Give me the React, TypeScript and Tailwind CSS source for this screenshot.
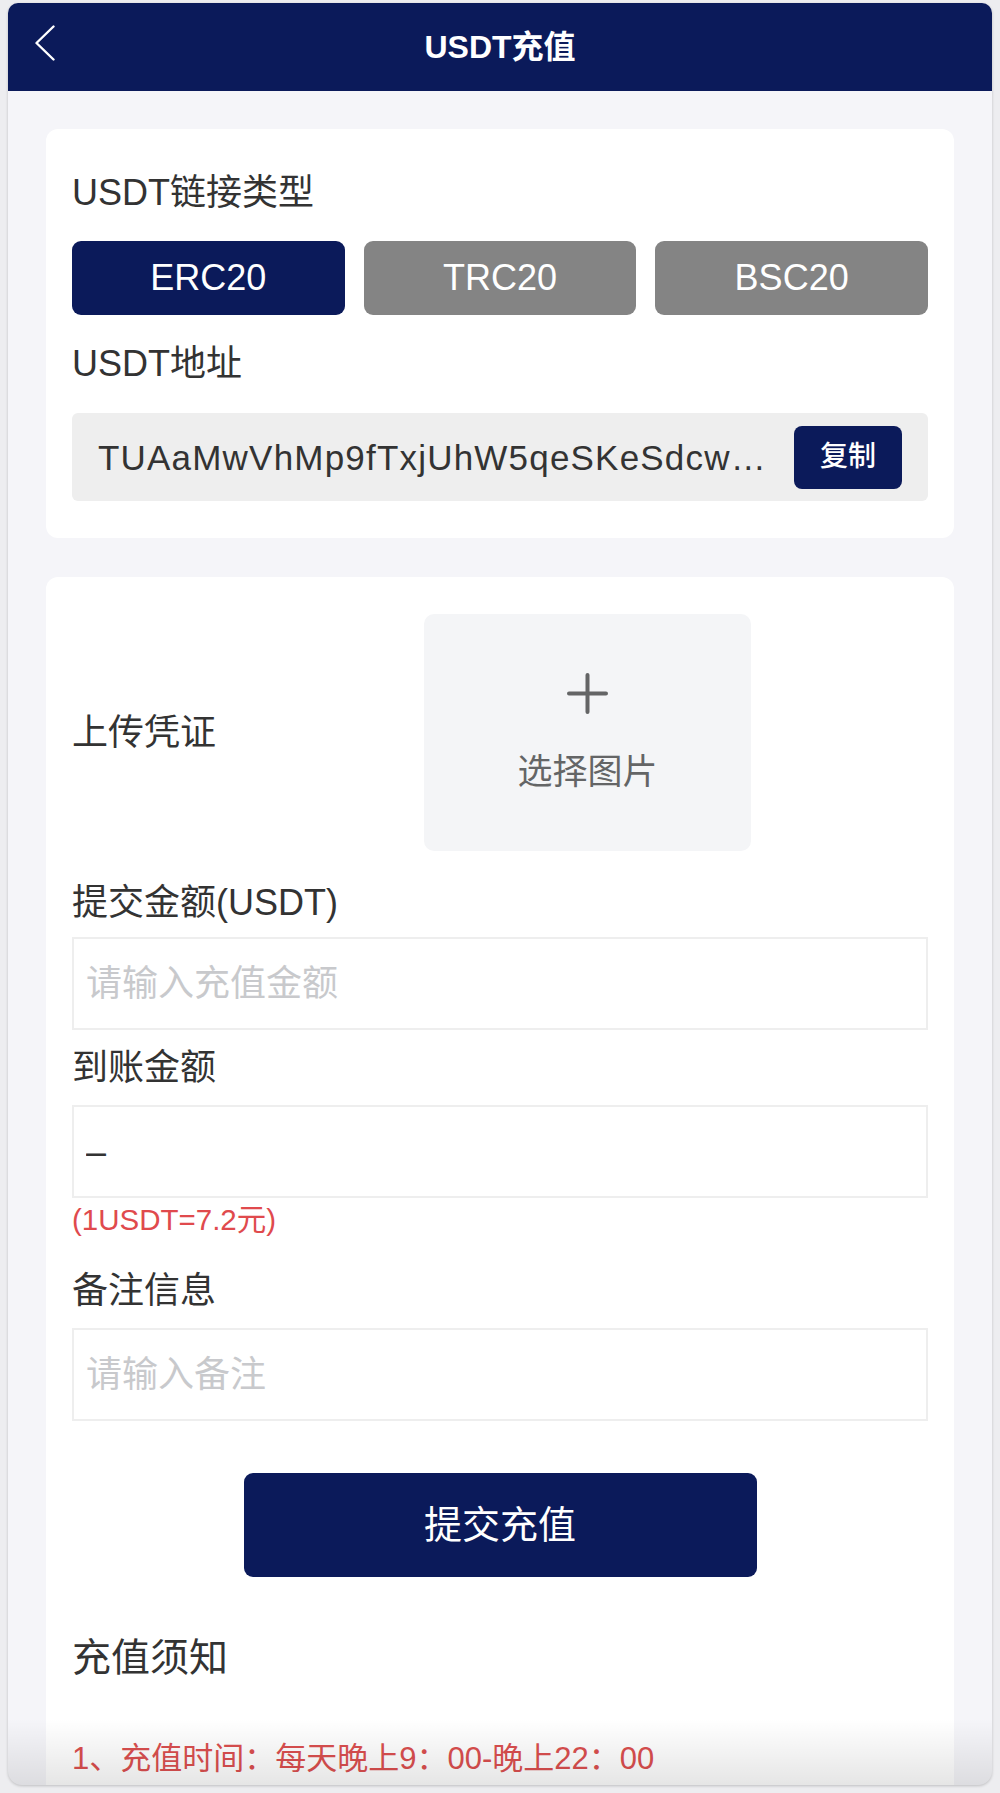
import { useState } from 'react'

const chains = ['ERC20', 'TRC20', 'BSC20']

export default function App() {
  const [chain, setChain] = useState('ERC20')

  return (
    <div className="h-[1793px] overflow-hidden bg-[#ededf0] px-[8px] pt-[3px] font-['Liberation_Sans','Noto_Sans_CJK_SC',sans-serif]">
      <div className="relative h-[1782px] overflow-hidden rounded-t-[10px] rounded-b-[14px] bg-[#f5f5f9] shadow-[0_1px_3px_rgba(0,0,0,0.2)]">
        {/* header */}
        <div className="relative flex h-[88px] items-center justify-center bg-[#0b1a5a]">
          <svg className="absolute left-[26px] top-[22px]" width="22" height="36" viewBox="0 0 22 36" fill="none">
            <path d="M19.5 1.5 L2.5 18 L19.5 34.5" stroke="#fff" strokeWidth="2.4" strokeLinecap="round" strokeLinejoin="round" />
          </svg>
          <h1 className="text-[32px] font-bold leading-none text-white">USDT充值</h1>
        </div>

        <div className="px-[38px] pt-[38px]">
          {/* chain + address */}
          <div className="rounded-[12px] bg-white px-[26px] pt-[39px] pb-[37px]">
            <p className="text-[36px] leading-[50px] text-[#333]">USDT链接类型</p>
            <div className="mt-[23px] grid grid-cols-3 gap-[19px]">
              {chains.map(c => (
                <button
                  key={c}
                  onClick={() => setChain(c)}
                  className={
                    'h-[74px] rounded-[9px] text-[36px] leading-none text-white ' +
                    (chain === c ? 'bg-[#0b1a5a]' : 'bg-[#848484]')
                  }
                >
                  {c}
                </button>
              ))}
            </div>
            <p className="mt-[24px] text-[36px] leading-[50px] text-[#333]">USDT地址</p>
            <div className="mt-[24px] flex h-[88px] items-center rounded-[6px] bg-[#eeeeee] pl-[26px] pr-[26px]">
              <span className="min-w-0 flex-1 whitespace-nowrap text-[35px] leading-none tracking-[1.2px] text-[#333]">
                TUAaMwVhMp9fTxjUhW5qeSKeSdcw…
              </span>
              <button className="h-[63px] w-[108px] shrink-0 rounded-[8px] bg-[#0b1a5a] text-[28px] font-medium leading-none text-white">
                复制
              </button>
            </div>
          </div>

          {/* form */}
          <div className="mt-[39px] rounded-[12px] bg-white px-[26px] pt-[37px] pb-[40px]">
            <div className="flex items-center">
              <p className="w-[352px] text-[36px] leading-[50px] text-[#333]">上传凭证</p>
              <div className="flex h-[237px] w-[327px] flex-col items-center rounded-[10px] bg-[#f4f5f7] pt-[59px]">
                <svg width="41" height="41" viewBox="0 0 41 41">
                  <path d="M20.5 2 V39 M2 20.5 H39" stroke="#646566" strokeWidth="4" strokeLinecap="round" />
                </svg>
                <span className="mt-[33px] text-[35px] leading-[50px] text-[#646566]">选择图片</span>
              </div>
            </div>

            <p className="mt-[27px] text-[36px] leading-[50px] text-[#333]">提交金额(USDT)</p>
            <input
              placeholder="请输入充值金额"
              className="mt-[9px] h-[93px] w-full border-2 border-[#eeeeee] px-[12px] text-[36px] text-[#333] outline-none placeholder:text-[#c8c9cc]"
            />

            <p className="mt-[13px] text-[36px] leading-[50px] text-[#333]">到账金额</p>
            <input
              readOnly
              value="–"
              className="mt-[12px] h-[93px] w-full border-2 border-[#eeeeee] px-[12px] text-[36px] text-[#333] outline-none"
            />
            <p className="mt-[2px] text-[29.5px] leading-[40px] text-[#e04a4d]">(1USDT=7.2元)</p>

            <p className="mt-[26px] text-[36px] leading-[50px] text-[#333]">备注信息</p>
            <input
              placeholder="请输入备注"
              className="mt-[12px] h-[93px] w-full border-2 border-[#eeeeee] px-[12px] text-[36px] text-[#333] outline-none placeholder:text-[#c8c9cc]"
            />

            <div className="mt-[52px] flex justify-center">
              <button className="h-[104px] w-[513px] rounded-[9px] bg-[#0b1a5a] text-[38px] leading-none text-white">
                提交充值
              </button>
            </div>

            <p className="mt-[56px] text-[39px] leading-[50px] text-[#333]">充值须知</p>
            <p className="mt-[56px] text-[31px] leading-[40px] text-[#db4f4f]">1、充值时间：每天晚上9：00-晚上22：00</p>
          </div>
        </div>

        {/* window bottom fade */}
        <div className="pointer-events-none absolute inset-x-0 bottom-0 h-[66px] bg-linear-to-b from-transparent to-black/10" />
      </div>
    </div>
  )
}
